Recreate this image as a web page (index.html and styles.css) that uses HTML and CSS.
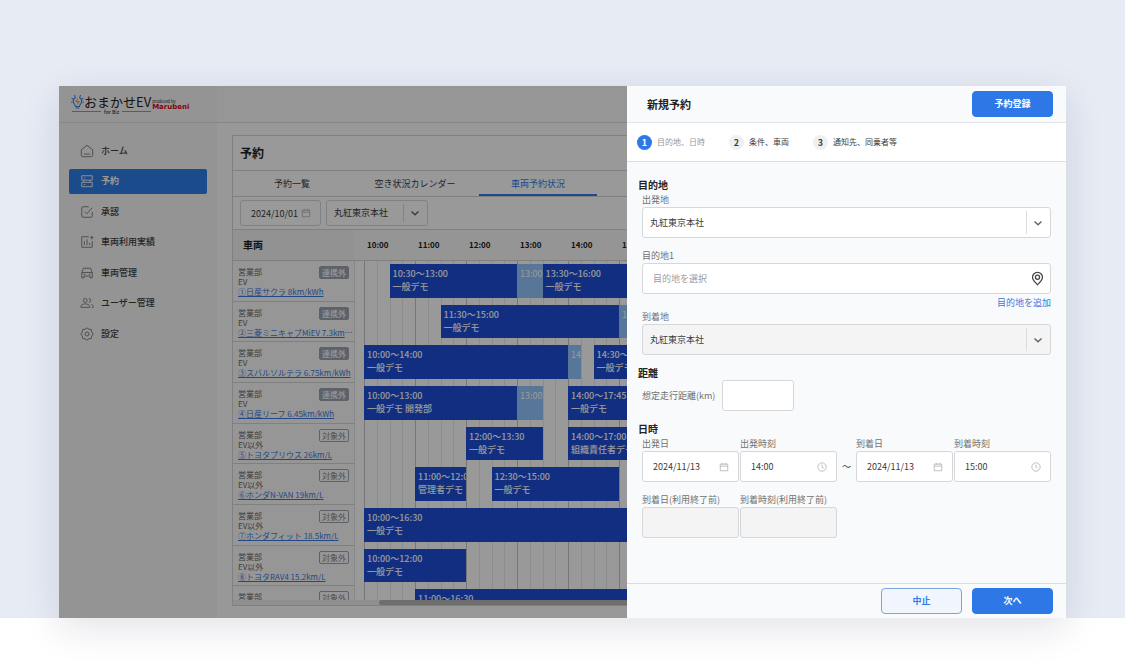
FILE: index.html
```html
<!DOCTYPE html>
<html lang="ja">
<head>
<meta charset="utf-8">
<meta name="viewport" content="width=device-width, initial-scale=1">
<title>おまかせEV 予約</title>
<link rel="stylesheet" href="styles.css">
</head>
<body>
<svg class="defs" aria-hidden="true">
  <symbol id="calendar" viewBox="0 0 12 12"><path d="M1.500 2.500h9v8h-9zM1.500 5h9M4 1v2.500M8 1v2.500"/></symbol>
  <symbol id="clock" viewBox="0 0 12 12"><circle cx="6" cy="6" r="5"/><path d="M6 3v3.200l2 1.200"/></symbol>
  <symbol id="chevron" viewBox="0 0 12 12"><path d="M2.500 4.500L6 7.800l3.500-3.300"/></symbol>
</svg>
<div class="stage">
<div class="app">
  <aside class="sidebar">
    <div class="logo">
      <svg class="logo-mark" viewBox="0 0 26 28"><g fill="none" stroke-linecap="round" stroke-width="2.200"><path stroke="#3b82e6" d="M9 6a8.500 8.500 0 0 0-3 12c2 3 3 3 3 6h8c0-3 1-3 3-6a8.500 8.500 0 0 0-3-12M10 27h6"/><path stroke="#3b82e6" d="M2 8l2 1M24 8l-2 1M7 2l1 2M19 2l-1 2M1 15h1.500M23.500 15H25"/><path stroke="#e0a83a" d="M13 9l-3 5h6l-3 5"/></g></svg>
      <div class="logo-main">
        <span class="logo-name">おまかせEV</span>
        <span class="logo-sub">for Biz</span>
      </div>
      <div class="logo-maker"><span>produced by</span><b>Marubeni</b></div>
    </div>
    <nav class="nav">
      <a href="#"><svg viewBox="0 0 16 16"><path d="M1.500 6.500L8 1.500l6.500 5v6.500a1.500 1.500 0 0 1-1.500 1.500H3A1.500 1.500 0 0 1 1.500 13zM4.500 11.500h7"/></svg>ホーム</a>
      <a href="#" class="active"><svg viewBox="0 0 16 16"><path d="M2 2h12v5H2zM2 9.500h12v5H2zM4.500 4.500h1.500M4.500 12h1.500M4.500 7v2.500M11.500 7v2.500"/></svg>予約</a>
      <a href="#"><svg viewBox="0 0 16 16"><path d="M14 8v4.500a1.500 1.500 0 0 1-1.500 1.500h-9A1.500 1.500 0 0 1 2 12.500v-9A1.500 1.500 0 0 1 3.500 2H10M5.500 7.500L8 10l6-7"/></svg>承認</a>
      <a href="#"><svg viewBox="0 0 16 16"><path d="M10 2H2v12h12V7M5 7v4.500M8 5v6.500M11 9v2.500M13.500 1v4M11.500 3h4"/></svg>車両利用実績</a>
      <a href="#"><svg viewBox="0 0 16 16"><path d="M2 7.500L4 2.500h8l2 5v6h-2.500v-2h-7v2H2zM2 7.500h12M4 9.500h2M10 9.500h2"/></svg>車両管理</a>
      <a href="#"><svg viewBox="0 0 16 16"><circle cx="6" cy="5" r="2.200"/><path d="M1 13v-1c0-2 2.500-3 5-3s5 1 5 3v1zM10 2.800a2.200 2.200 0 0 1 0 4.400M13 9.500c1.500.5 2 1.500 2 2.500v1h-1.500"/></svg>ユーザー管理</a>
      <a href="#"><svg viewBox="0 0 16 16"><path d="M8 1l2.200 1.500 2.700.4.500 2.700L15 8l-1.600 2.400-.5 2.700-2.700.4L8 15l-2.200-1.500-2.700-.4-.5-2.700L1 8l1.600-2.400.5-2.700 2.700-.4z"/><circle cx="8" cy="8" r="2.300"/></svg>設定</a>
    </nav>
  </aside>

  <div class="main">
    <header class="topbar"></header>
    <main class="content">
      <section class="card">
        <h1>予約</h1>
        <div class="tabs">
          <button type="button">予約一覧</button>
          <button type="button">空き状況カレンダー</button>
          <button type="button" class="selected">車両予約状況</button>
        </div>
        <div class="filters">
          <div class="field date-filter"><input type="text" value="2024/10/01" aria-label="日付"><svg class="icon"><use href="#calendar"/></svg></div>
          <div class="field pick office-filter"><select aria-label="拠点"><option>丸紅東京本社</option></select><svg class="icon"><use href="#chevron"/></svg></div>
        </div>
        <div class="sched-head">
          <div class="car-head">車両</div>
          <div class="hours"><span>10:00</span><span>11:00</span><span>12:00</span><span>13:00</span><span>14:00</span><span>15:00</span><span>16:00</span></div>
        </div>
        <div class="sched-view">
          <div class="sched-body">
            <div class="row"><div class="car"><p>営業部</p><p>EV</p><a href="#">①日産サクラ 8km/kWh</a><span class="tag">連携外</span></div>
              <div class="track"><div class="bar" style="grid-column:3/13">10:30〜13:00<br>一般デモ</div><div class="bar buffer" style="grid-column:13/15">13:00</div><div class="bar" style="grid-column:15/25">13:30〜16:00<br>一般デモ</div></div></div>
            <div class="row"><div class="car"><p>営業部</p><p>EV</p><a href="#">②三菱ミニキャブMiEV 7.3km/kWh</a><span class="tag">連携外</span></div>
              <div class="track"><div class="bar" style="grid-column:7/21">11:30〜15:00<br>一般デモ</div><div class="bar buffer" style="grid-column:21/23">15:00</div></div></div>
            <div class="row"><div class="car"><p>営業部</p><p>EV</p><a href="#">③スバルソルテラ 6.75km/kWh</a><span class="tag">連携外</span></div>
              <div class="track"><div class="bar" style="grid-column:1/17">10:00〜14:00<br>一般デモ</div><div class="bar buffer" style="grid-column:17/18">14:00</div><div class="bar" style="grid-column:19/29">14:30〜17:00<br>一般デモ</div></div></div>
            <div class="row"><div class="car"><p>営業部</p><p>EV</p><a href="#">④日産リーフ 6.45km/kWh</a><span class="tag">連携外</span></div>
              <div class="track"><div class="bar" style="grid-column:1/13">10:00〜13:00<br>一般デモ 開発部</div><div class="bar buffer" style="grid-column:13/15">13:00</div><div class="bar" style="grid-column:17/29">14:00〜17:45<br>一般デモ</div></div></div>
            <div class="row"><div class="car"><p>営業部</p><p>EV以外</p><a href="#">⑤トヨタプリウス 26km/L</a><span class="tag outline">対象外</span></div>
              <div class="track"><div class="bar" style="grid-column:9/15">12:00〜13:30<br>一般デモ</div><div class="bar" style="grid-column:17/29">14:00〜17:00<br>組織責任者デモ</div></div></div>
            <div class="row"><div class="car"><p>営業部</p><p>EV以外</p><a href="#">⑥ホンダN-VAN 19km/L</a><span class="tag outline">対象外</span></div>
              <div class="track"><div class="bar" style="grid-column:5/9">11:00〜12:00<br>管理者デモ</div><div class="bar" style="grid-column:11/21">12:30〜15:00<br>一般デモ</div></div></div>
            <div class="row"><div class="car"><p>営業部</p><p>EV以外</p><a href="#">⑦ホンダフィット 18.5km/L</a><span class="tag outline">対象外</span></div>
              <div class="track"><div class="bar" style="grid-column:1/27">10:00〜16:30<br>一般デモ</div></div></div>
            <div class="row"><div class="car"><p>営業部</p><p>EV以外</p><a href="#">⑧トヨタRAV4 15.2km/L</a><span class="tag outline">対象外</span></div>
              <div class="track"><div class="bar" style="grid-column:1/9">10:00〜12:00<br>一般デモ</div></div></div>
            <div class="row"><div class="car"><p>営業部</p><span class="tag outline">対象外</span></div>
              <div class="track"><div class="bar" style="grid-column:5/27">11:00〜16:30</div></div></div>
          </div>
        </div>
        <div class="scrollbar"><div class="thumb"></div></div>
      </section>
    </main>
  </div>

  <div class="backdrop"></div>

  <form class="drawer">
    <div class="drawer-head"><h2>新規予約</h2><button type="button" class="btn primary">予約登録</button></div>
    <ol class="steps">
      <li class="current"><b>1</b>目的地、日時</li>
      <li><b>2</b>条件、車両</li>
      <li><b>3</b>通知先、同乗者等</li>
    </ol>
    <div class="drawer-body">
      <h3>目的地</h3>
      <div class="group">
        <label for="from">出発地</label>
        <div class="field pick"><select id="from"><option>丸紅東京本社</option></select><svg class="icon"><use href="#chevron"/></svg></div>
      </div>
      <div class="group next">
        <label for="dest">目的地1</label>
        <div class="field"><input id="dest" type="text" placeholder="目的地を選択"><svg class="pin" viewBox="0 0 16 18"><path d="M8 16.500C5 13.500 2 11 2 7.500a6 6 0 0 1 12 0c0 3.500-3 6-6 9z"/><circle cx="8" cy="7.500" r="2.500"/></svg></div>
        <a href="#" class="add">目的地を追加</a>
      </div>
      <div class="group">
        <label for="to">到着地</label>
        <div class="field pick off"><select id="to" disabled><option>丸紅東京本社</option></select><svg class="icon"><use href="#chevron"/></svg></div>
      </div>
      <h3 class="later">距離</h3>
      <div class="group distance">
        <label for="km">想定走行距離(km)</label>
        <div class="field"><input id="km" type="text"></div>
      </div>
      <h3 class="later">日時</h3>
      <div class="group period">
        <div class="pair">
          <div><label for="d1">出発日</label><div class="field"><input id="d1" type="text" value="2024/11/13"><svg class="icon"><use href="#calendar"/></svg></div></div>
          <div><label for="t1">出発時刻</label><div class="field"><input id="t1" type="text" value="14:00"><svg class="icon"><use href="#clock"/></svg></div></div>
        </div>
        <span class="tilde">〜</span>
        <div class="pair">
          <div><label for="d2">到着日</label><div class="field"><input id="d2" type="text" value="2024/11/13"><svg class="icon"><use href="#calendar"/></svg></div></div>
          <div><label for="t2">到着時刻</label><div class="field"><input id="t2" type="text" value="15:00"><svg class="icon"><use href="#clock"/></svg></div></div>
        </div>
      </div>
      <div class="group period next">
        <div class="pair">
          <div><label for="d3">到着日(利用終了前)</label><div class="field off"><input id="d3" type="text" disabled></div></div>
          <div><label for="t3">到着時刻(利用終了前)</label><div class="field off"><input id="t3" type="text" disabled></div></div>
        </div>
      </div>
    </div>
    <div class="drawer-foot"><button type="button" class="btn">中止</button><button type="button" class="btn primary">次へ</button></div>
  </form>
</div>
</div>
</body>
</html>
```
FILE: styles.css
```css
* { box-sizing: border-box; }
body, h1, h2, h3, p, ol { margin: 0; padding: 0; }
body {
  min-height: 100vh;
  padding-bottom: 48px;
  background: #fff;
  color: #3c3c3c;
  font: 9px/14px "Noto Sans CJK JP", "Noto Sans", sans-serif;
}
button, input, select { font: inherit; color: inherit; margin: 0; }
a { color: #3b78dc; text-decoration: none; }
svg { fill: none; stroke: currentColor; flex: none; }
.defs { display: none; }

.stage { background: #e7ebf4; padding: 86px 59px 0; }
.app {
  position: relative;
  display: flex;
  background: #fff;
  box-shadow: 0 10px 36px rgba(20, 25, 50, 0.12);
}

/* sidebar */
.sidebar { width: 158px; flex: none; background: #f7f7f7; }
.logo {
  display: flex;
  height: 37px;
  padding: 8px 0 0 12px;
  border-bottom: 1px solid #e2e2e2;
}
.logo-mark { width: 13px; height: 15px; }
.logo-main { display: flex; flex-direction: column; }
.logo-name { font-size: 13px; line-height: 15px; color: #222; white-space: nowrap; }
.logo-sub {
  display: flex;
  align-items: center;
  gap: 3px;
  margin-left: -12px;
  font-size: 5px;
  line-height: 5px;
  font-weight: 500;
}
.logo-sub::before, .logo-sub::after { content: ""; flex: 1; height: 1px; background: #999; }
.logo-maker { display: flex; flex-direction: column; padding: 5px 0 0 1px; font-size: 4px; line-height: 5px; color: #222; }
.logo-maker b { font: 700 7px/7px "DejaVu Sans", sans-serif; color: #e0001b; }

.nav {
  display: flex;
  flex-direction: column;
  justify-content: space-between;
  height: 208px;
  margin: 15px 10px 0;
}
.nav a {
  display: flex;
  align-items: center;
  gap: 7px;
  height: 25px;
  padding-left: 11px;
  border-radius: 2px;
  color: #3c3c3c;
  font-weight: 500;
}
.nav svg { width: 14px; height: 14px; color: #777; }
.nav .active { background: #2f7de8; color: #fff; font-weight: 700; }
.nav .active svg { color: #fff; }

/* main area */
.main { flex: 1; min-width: 0; background: #fdfdfd; }
.topbar { height: 37px; border-bottom: 1px solid #e2e2e2; background: #fbfbfb; }
.content { padding: 12px 15px; }
.card { border: 1px solid #d6d6d6; background: #fff; }
.card h1 {
  padding: 0 7px;
  font-size: 12px;
  line-height: 34px;
  border-bottom: 1px solid #d6d6d6;
  color: #222;
}
.tabs { display: flex; gap: 5px; height: 26px; border-bottom: 1px solid #d6d6d6; }
.tabs button {
  width: 118px;
  padding: 2px 0 0;
  border: 0;
  border-bottom: 2px solid transparent;
  background: none;
}
.tabs .selected { color: #2f7de8; border-color: #2f7de8; }
.filters {
  display: flex;
  align-items: center;
  gap: 5px;
  height: 33px;
  padding: 0 7px;
  border-bottom: 1px solid #d6d6d6;
}

/* schedule */
.sched-head { display: flex; height: 31px; border-bottom: 1px solid #d6d6d6; background: #f8f8f9; overflow: hidden; }
.car-head { width: 121px; flex: none; padding-left: 10px; font-size: 10px; line-height: 30px; font-weight: 700; color: #222; background: #f3f3f5; }
.hours { display: grid; grid-template-columns: repeat(7, 51px); margin-left: 10px; font-size: 8px; line-height: 30px; font-weight: 700; color: #222; }
.hours span { padding-left: 3px; }
.sched-view { height: 339px; overflow: hidden; }
.sched-body { display: grid; grid-auto-rows: 1fr; height: 366px; }
.row { display: flex; min-height: 0; }
.car {
  position: relative;
  width: 122px;
  flex: none;
  padding: 6px 0 0 5px;
  border-right: 1px solid #e2e2e2;
  border-bottom: 1px solid #d6d6d6;
  background: #fbfbfb;
  font-size: 8px;
  line-height: 10px;
  color: #666;
}
.car a { display: block; overflow: hidden; text-overflow: ellipsis; white-space: nowrap; text-decoration: underline; }
.tag {
  position: absolute;
  top: 5px;
  right: 5px;
  padding: 0 2px;
  border: 1px solid #9ca3af;
  border-radius: 2px;
  line-height: 11px;
  background: #9ca3af;
  color: #fff;
  font-weight: 500;
}
.tag.outline { background: none; color: #888; font-weight: 400; }
.track {
  --hour: 51px;
  display: grid;
  flex: none;
  grid-template-columns: repeat(28, 1fr);
  width: calc(var(--hour) * 7);
  margin-left: 9px;
  padding: 3px 0 4px;
  background:
    repeating-linear-gradient(90deg, #c4c7cc 0 1px, transparent 1px var(--hour)),
    repeating-linear-gradient(90deg, #e8e9eb 0 1px, transparent 1px calc(var(--hour) / 4));
}
.bar { min-width: 0; padding: 3px 0 0 3px; overflow: hidden; white-space: nowrap; background: #1d4ed8; color: #fff; line-height: 13px; font-weight: 500; }
.bar.buffer { background: #93c5fd; font-weight: 400; }
.scrollbar { height: 5px; background: #eee; }
.thumb { height: 5px; margin-left: 146px; border-radius: 3px; background: #b8b8b8; }

.backdrop { position: absolute; inset: 0; background: rgba(0, 0, 0, 0.4); }

/* form controls */
.field { position: relative; height: 31px; border: 1px solid #d5d7da; border-radius: 3px; background: #fff; }
.field input, .field select {
  display: block;
  width: 100%;
  height: 100%;
  padding: 0 10px;
  border: 0;
  border-radius: 2px;
  outline: 0;
  background: transparent;
  appearance: none;
  opacity: 1;
}
.field select { padding: 0 7px; }
.field input::placeholder { color: #9a9ca5; opacity: 1; }
.field.off { background: #f4f4f4; }
.icon { position: absolute; top: 50%; right: 9px; width: 10px; height: 10px; margin-top: -5px; color: #b5b5b5; pointer-events: none; }
.pick .icon { right: 6px; width: 12px; height: 12px; margin-top: -6px; color: #666; stroke-width: 1.5; }
.pick::after { content: ""; position: absolute; top: 3px; bottom: 3px; right: 23px; width: 1px; background: #ddd; }
.pin { position: absolute; top: 7px; right: 5px; width: 15px; height: 15px; color: #444; stroke-width: 1.5; }
.filters .field { height: 26px; }
.date-filter { width: 81px; }
.office-filter { width: 102px; }
.btn {
  width: 81px;
  height: 26px;
  padding: 0;
  border: 1px solid #7ba6dc;
  border-radius: 4px;
  background: #f1f5fd;
  color: #2f7de8;
  font-weight: 700;
}
.btn.primary { border-color: #2d78e6; background: #2d78e6; color: #fff; }

/* drawer */
.drawer {
  position: absolute;
  top: 0;
  right: 0;
  bottom: 0;
  display: flex;
  flex-direction: column;
  width: 439px;
  background: #f9fafc;
}
.drawer-head {
  display: flex;
  align-items: center;
  justify-content: space-between;
  height: 37px;
  padding: 0 13px 0 20px;
  border-bottom: 1px solid #e2e5e9;
}
.drawer-head h2 { font-size: 11px; line-height: 16px; color: #222; }
.steps {
  display: flex;
  align-items: center;
  gap: 24px;
  height: 39px;
  padding: 0 10px;
  border-bottom: 1px solid #dadde2;
  background: #fff;
  list-style: none;
  font-size: 8px;
}
.steps li { display: flex; align-items: center; gap: 5px; }
.steps b { width: 15px; height: 15px; border-radius: 50%; background: #f0f0f1; font-size: 9px; line-height: 15px; text-align: center; }
.steps .current { color: #999; }
.steps .current b { background: #2d78e6; color: #fff; }
.drawer-body { flex: 1; padding: 16px 15px 0 11px; }
.drawer-body h3 { font-size: 10px; line-height: 14px; color: #222; }
.drawer-body .later { margin-top: 11px; }
.group { margin-left: 4px; }
.next { margin-top: 10px; }
.group label { display: block; line-height: 15px; color: #707070; white-space: nowrap; }
.add { display: block; width: fit-content; margin: 2px 0 0 auto; line-height: 13px; }
.distance { display: flex; align-items: center; gap: 7px; }
.distance .field { width: 72px; }
.period { display: grid; grid-template-columns: 1fr 19px 1fr; }
.pair { display: grid; grid-template-columns: 1fr 1fr; gap: 1px; }
.tilde { align-self: end; line-height: 31px; text-align: center; }
.drawer-foot {
  display: flex;
  align-items: center;
  justify-content: flex-end;
  gap: 10px;
  height: 35px;
  padding: 0 13px;
  border-top: 1px solid #dadde2;
}
```
